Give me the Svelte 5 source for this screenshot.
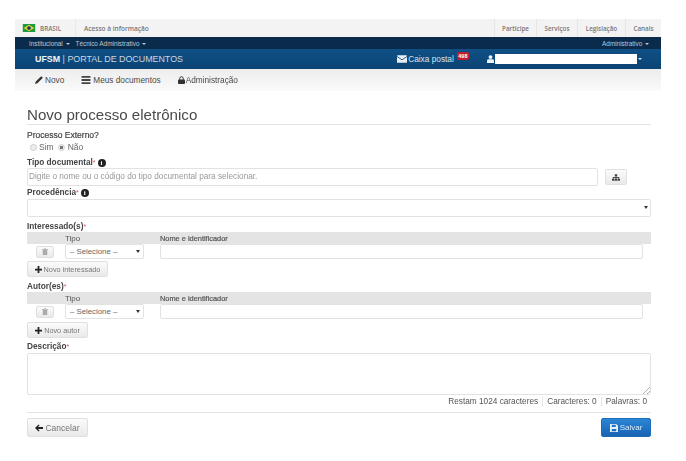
<script>
  const parties = [
    { label: 'Interessado(s)', add: 'Novo interessado', cls: 'add-i' },
    { label: 'Autor(es)', add: 'Novo autor', cls: 'add-a' }
  ];
</script>

<div class="page">
  <div class="gov">
    <div class="brasil">
      <svg class="flag" viewBox="0 0 14 9" width="14" height="8"><rect width="14" height="9" fill="#1f9a3c"/><path d="M7 .8 13 4.5 7 8.2 1 4.5Z" fill="#d8d23a"/><circle cx="7" cy="4.5" r="2.100" fill="#1d3560"/></svg>
      <span>BRASIL</span>
    </div>
    <div class="acesso">Acesso à informação</div>
    <div class="gov-links">
      <span class="w1">Participe</span><span class="w2">Serviços</span><span class="w3">Legislação</span><span class="w4">Canais</span>
    </div>
  </div>

  <div class="topnav">
    <span>Institucional <i class="caret"></i></span>
    <span>Técnico Administrativo <i class="caret"></i></span>
    <span class="right">Administrativo <i class="caret"></i></span>
  </div>

  <div class="brandbar">
    <div class="brand"><b>UFSM</b> | PORTAL DE DOCUMENTOS</div>
    <div class="mail">
      <svg viewBox="0 0 12 9" width="10" height="8"><rect width="12" height="9" rx="1" fill="#e8eef4"/><path d="M0 1.500 6 5.500 12 1.500" fill="none" stroke="#0d4a80" stroke-width="1"/></svg>
      Caixa postal <em>498</em>
    </div>
    <svg class="user" viewBox="0 0 8 9" width="7" height="8"><circle cx="4" cy="2.300" r="2.200" fill="#eef2f6"/><path d="M0 9V6.500Q0 4.800 2 4.800H6Q8 4.800 8 6.500V9Z" fill="#eef2f6"/></svg>
    <div class="userbox"></div>
    <i class="caret usercaret"></i>
  </div>

  <div class="menu">
    <span>
      <svg viewBox="0 0 10 10" width="8" height="8"><path d="M0 10 1 7 7 1Q8 0 9 1T9 3L3 9Z" fill="#333"/></svg>
      Novo
    </span>
    <span>
      <svg viewBox="0 0 10 9" width="10" height="8"><path d="M0 0H10V2H0ZM0 3.500H10V5.500H0ZM0 7H10V9H0Z" fill="#444"/></svg>
      Meus documentos
    </span>
    <span class="admin">
      <svg viewBox="0 0 8 9" width="7" height="8"><rect y="4" width="8" height="5" rx="1" fill="#333"/><path d="M2 4.500V2.800a2 2 0 0 1 4 0V4.500" fill="none" stroke="#333" stroke-width="1.100"/></svg>
      Administração
    </span>
  </div>

  <form class="form">
    <h1>Novo processo eletrônico</h1>

    <div class="label first">Processo Externo?</div>
    <div class="radios">
      <i class="radio"></i><span>Sim</span>
      <i class="radio on"></i><span>Não</span>
    </div>

    <div class="label tipo">Tipo documental<sup>*</sup> <i class="info">i</i></div>
    <div class="tipo-row">
      <div class="field placeholder">Digite o nome ou o código do tipo documental para selecionar.</div>
      <div class="btn tree">
        <svg viewBox="0 0 10 8" width="8" height="7"><path d="M3.500 0H6.500V2.500H5.500V3.500H9V5.500H10V8H7V5.500H8V4.500H5.500V5.500H6.500V8H3.500V5.500H4.500V4.500H2V5.500H3V8H0V5.500H1V3.500H4.500V2.500H3.500Z" fill="#444"/></svg>
      </div>
    </div>

    <div class="label proc">Procedência<sup>*</sup> <i class="info">i</i></div>
    <div class="field select-field"><i class="arrow"></i></div>

    {#each parties as p}
      <div class="label party">{p.label}<sup>*</sup></div>
      <div class="thead"><span class="th1">Tipo</span><span class="th2">Nome e identificador</span></div>
      <div class="trow">
        <div class="btn trash">
          <svg viewBox="0 0 8 9" width="6" height="7"><path d="M1 2.500H7V9H1ZM0 1H8V2H0ZM3 0H5V1H3Z" fill="#aaa"/></svg>
        </div>
        <div class="field sel">– Selecione –<i class="arrow"></i></div>
        <div class="field name"></div>
      </div>
      <div class="btn add {p.cls}">
        <svg viewBox="0 0 8 8" width="7" height="7"><path d="M3 0H5V3H8V5H5V8H3V5H0V3H3Z" fill="#222"/></svg>
        {p.add}
      </div>
    {/each}

    <div class="label desc">Descrição<sup>*</sup></div>
    <div class="field area">
      <svg viewBox="0 0 7 7" width="7" height="7"><path d="M0 7 7 0M4 7 7 4" stroke="#999" stroke-width=".8"/></svg>
    </div>
    <div class="counts">
      <span>Restam 1024 caracteres</span><span>Caracteres: 0</span><span>Palavras: 0</span>
    </div>

    <div class="actions">
      <div class="btn cancel">
        <svg viewBox="0 0 9 8" width="8" height="8"><path d="M4 0 5.200 1.200 3.200 3H9V5H3.200L5.200 6.800 4 8 0 4Z" fill="#222"/></svg>
        Cancelar
      </div>
      <div class="btn save">
        <svg viewBox="0 0 9 9" width="8" height="8"><path d="M0 0H7L9 2V9H0ZM2 0.800V3.300H6.500V0.800ZM2 5.500V8.200H7V5.500Z" fill="#e6f0fa" fill-rule="evenodd"/></svg>
        Salvar
      </div>
    </div>
  </form>
</div>

<style>
  :global(body) {
    margin: 0;
    background: #fff;
  }
  .page {
    width: 646px;
    margin-left: 15px;
    padding-top: 19px;
    font-family: "Liberation Sans", Arial, sans-serif;
    font-size: 8.300px;
    color: #555;
    filter: blur(0.4px);
  }
  i { font-style: normal; display: inline-block; }

  .gov {
    height: 18px;
    background: #f3f3f3;
    display: flex;
    align-items: center;
    font-family: "Open Sans", sans-serif;
    font-size: 6.300px;
    font-weight: 600;
    color: #777;
  }
  .brasil {
    display: flex;
    align-items: center;
    gap: 4px;
    width: 61px;
    padding-left: 7px;
    box-sizing: border-box;
    height: 100%;
    border-right: 1px solid #e8e8e8;
  }
  .acesso { margin-left: 8px; font-size: 6.500px; }
  .gov-links { margin-left: auto; display: flex; height: 100%; }
  .gov-links span {
    display: flex;
    align-items: center;
    justify-content: center;
    border-left: 1px solid #e6e6e6;
    box-sizing: border-box;
  }
  .w1 { width: 42px; }
  .w2 { width: 41px; }
  .w3 { width: 48px; }
  .w4 { width: 36px; }

  .topnav {
    height: 12px;
    background: #0a2b4b;
    color: #b9c9d9;
    display: flex;
    align-items: center;
    gap: 6px;
    padding: 0 12px 0 14px;
    font-size: 6.400px;
  }
  .topnav .right { margin-left: auto; }
  .caret {
    width: 0;
    height: 0;
    border: 2px solid transparent;
    border-top: 2.500px solid currentColor;
    border-bottom: 0;
    vertical-align: middle;
    margin-left: 1px;
  }

  .brandbar {
    height: 20px;
    background: linear-gradient(#0f5086, #0b4474);
    color: #e6edf3;
    display: flex;
    align-items: center;
  }
  .brand {
    margin-left: 20px;
    font-size: 8.900px;
    color: #c9d6e2;
  }
  .brand b { color: #f2f5f8; }
  .mail {
    margin-left: auto;
    display: flex;
    align-items: center;
    gap: 1px;
    font-size: 8.300px;
    color: #d8e2ec;
  }
  .mail em {
    font-style: normal;
    font-weight: 700;
    font-size: 5.500px;
    color: #fff;
    background: #c0202c;
    border-radius: 2px;
    padding: 1px 1.500px;
    margin: -6px 0 0 2px;
  }
  .user { margin-left: 18px; }
  .userbox {
    width: 142px;
    height: 10px;
    background: #fff;
    margin-left: 1px;
  }
  .usercaret { color: #dfe7ee; margin: 0 19px 0 1px; }

  .menu {
    height: 22px;
    background: linear-gradient(#ededed, #fafafa);
    display: flex;
    align-items: center;
    padding-left: 20px;
    font-size: 8.250px;
    color: #4a4a4a;
    gap: 17px;
  }
  .menu span { display: flex; align-items: center; gap: 2px; }
  .menu .admin { gap: 1px; }

  .form {
    padding: 15px 10px 0 12px;
    display: flex;
    flex-direction: column;
  }
  h1 {
    margin: 0;
    font-size: 15.100px;
    line-height: 18px;
    font-weight: 400;
    color: #4a4a4a;
    border-bottom: 1px solid #e5e5e5;
  }
  .label {
    font-size: 8.250px;
    font-weight: 700;
    color: #444;
    line-height: 10px;
    display: flex;
    align-items: center;
    white-space: pre;
  }
  sup {
    color: #d05a5a;
    font-size: 7px;
    line-height: 0;
    font-weight: 400;
  }
  .info {
    width: 8px;
    height: 8px;
    border-radius: 50%;
    background: #222;
    color: #fff;
    font: 700 7px/8px "Liberation Serif", serif;
    text-align: center;
    margin-left: 2px;
  }
  .first {
    margin-top: 5px;
    font-size: 8.500px;
    font-weight: 400;
    -webkit-text-stroke: 0.200px #444;
  }
  .radios {
    display: flex;
    align-items: center;
    height: 12px;
    margin-top: 1px;
    padding-left: 3px;
    color: #666;
    font-size: 8.500px;
  }
  .radio {
    width: 5px;
    height: 5px;
    border-radius: 50%;
    border: 1px solid #ccc;
    background: #eee;
    margin-right: 2px;
  }
  .radio.on {
    background: radial-gradient(circle, #777 0 1.500px, #eee 2px);
    margin-left: 4px;
    margin-right: 3px;
  }
  .tipo { margin-top: 5px; }
  .tipo-row {
    display: flex;
    align-items: center;
    gap: 7px;
  }
  .field {
    border: 1px solid #e2e2e2;
    border-radius: 2px;
    background: #fff;
    box-sizing: border-box;
  }
  .placeholder {
    width: 571px;
    height: 18px;
    line-height: 16px;
    padding-left: 1px;
    color: #999;
    font-size: 8.250px;
  }
  .btn {
    border: 1px solid #e0e0e0;
    border-radius: 2px;
    background: linear-gradient(#fbfbfb, #e9e9e9);
    box-sizing: border-box;
    display: flex;
    align-items: center;
    justify-content: center;
  }
  .tree { width: 22px; height: 16px; }
  .proc { margin-top: 2px; }
  .select-field {
    height: 18px;
    position: relative;
    margin-top: 1px;
  }
  .arrow {
    position: absolute;
    right: 2px;
    top: 6px;
    width: 0;
    height: 0;
    border: 2px solid transparent;
    border-top: 3.500px solid #333;
    border-bottom: 0;
  }
  .party { margin-top: 4px; height: 11px; }
  .thead {
    height: 12px;
    background: #e4e4e4;
    display: flex;
    align-items: center;
    font-size: 7.400px;
    color: #555;
  }
  .th1 { margin-left: 38px; font-size: 8px; width: 95px; }
  .th2 { -webkit-text-stroke: 0.200px #555; }
  .trow {
    height: 15px;
    display: flex;
    align-items: center;
  }
  .trash { width: 18px; height: 12px; margin-left: 9px; }
  .sel {
    width: 79px;
    height: 15px;
    margin-left: 11px;
    position: relative;
    line-height: 13px;
    padding-left: 4px;
    font-size: 7.800px;
    color: #666;
  }
  .sel .arrow { right: 3px; top: 5px; }
  .name { width: 483px; height: 15px; margin-left: 16px; }
  .add {
    height: 16px;
    margin-top: 2px;
    align-self: flex-start;
    font-size: 7.300px;
    color: #777;
    gap: 2px;
  }
  .add-i { width: 81px; }
  .add-a { width: 61px; margin-top: 3px; }
  .desc { margin-top: 4px; }
  .area {
    height: 42px;
    margin-top: 1px;
    position: relative;
  }
  .area svg { position: absolute; right: 0; bottom: 0; }
  .counts {
    height: 12px;
    display: flex;
    justify-content: flex-end;
    align-items: center;
    font-size: 8.250px;
    color: #555;
    margin-bottom: 5px;
  }
  .counts span { padding: 0 4px; border-left: 1px solid #e5e5e5; }
  .counts span:first-child { border: 0; }
  .actions {
    border-top: 1px solid #e3e3e3;
    padding-top: 5px;
    display: flex;
    justify-content: space-between;
  }
  .cancel {
    width: 61px;
    height: 19px;
    font-size: 8.500px;
    color: #777;
    gap: 2px;
  }
  .save {
    width: 50px;
    height: 19px;
    background: linear-gradient(#2a86d6, #1a62b2);
    border-color: #1f6cb8;
    color: #dcebf8;
    font-size: 8px;
    gap: 2px;
  }
</style>
